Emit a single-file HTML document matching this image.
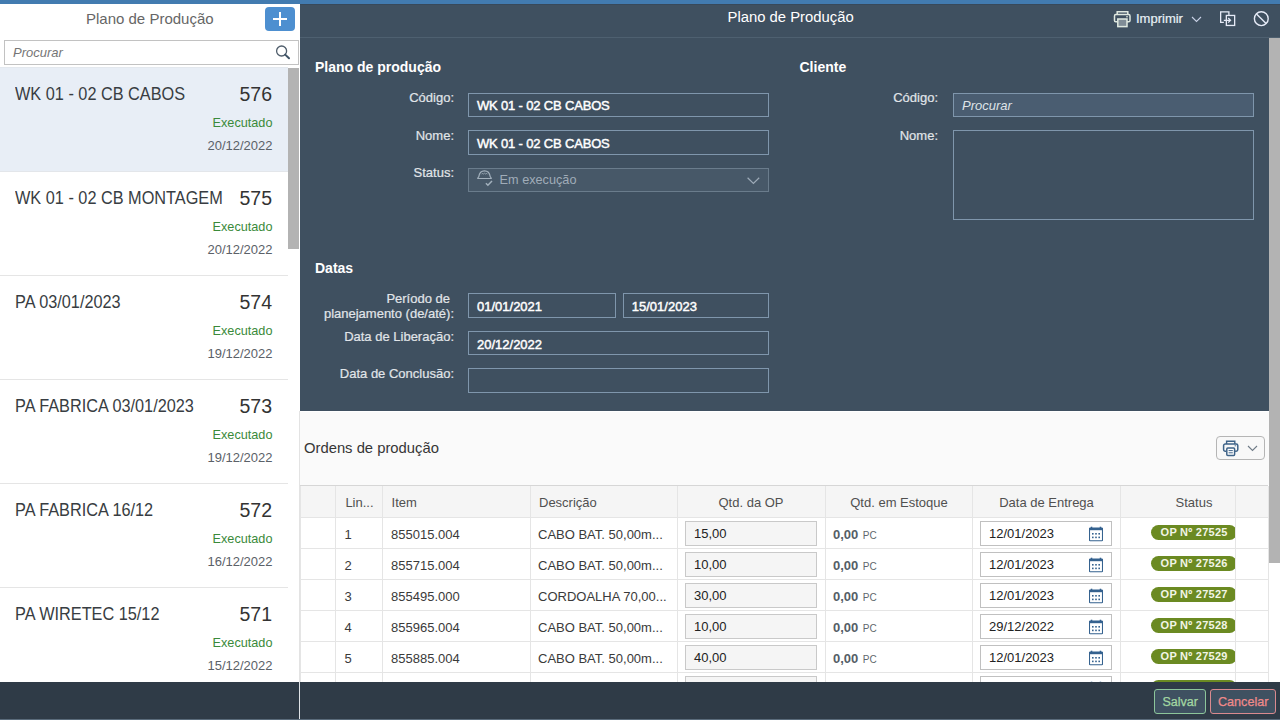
<!DOCTYPE html>
<html><head><meta charset="utf-8">
<style>
*{box-sizing:border-box;margin:0;padding:0}
html,body{width:1280px;height:720px;overflow:hidden;background:#fff;font-family:"Liberation Sans",sans-serif}
.a{position:absolute}
.t{position:absolute;white-space:nowrap;line-height:1}
.r{text-align:right}
#topbar{left:0;top:0;width:1280px;height:4px;background:#427bb0}
#left{left:0;top:4px;width:300px;height:678px;background:#fff;overflow:hidden}
#right{left:300px;top:4px;width:980px;height:678px;background:#fff;overflow:hidden}
#footer{left:0;top:682px;width:1280px;height:38px;background:#2f3b47}
.lbl{color:#e1e5e9;font-size:13px;-webkit-text-stroke:0.2px #e1e5e9}
.inp{position:absolute;border:1px solid #7f96ac;background:#3f5060}
.itxt{color:#fff;font-size:13px;-webkit-text-stroke:0.45px #fff}
.sep{position:absolute;background:#e5e5e5}
.ht{color:#505050;font-size:13px}
.ct{color:#3a3a3a;font-size:13px}
.qin{position:absolute;left:385px;width:132px;height:25px;border:1px solid #c9c9c9;background:#f5f5f5}
.din{position:absolute;left:680px;width:132px;height:25px;border:1px solid #c0c0c0;background:#fff}
.pill{position:absolute;left:851px;width:86px;height:15px;border-radius:8px;background:#6b8a22}
.ptxt{color:#f2f5e6;font-weight:bold;font-size:11px;letter-spacing:0.25px}
</style></head><body>
<div id="topbar" class="a"></div>

<!-- LEFT MASTER -->
<div id="left" class="a">
  <div class="t" style="left:86px;top:7px;font-size:15px;color:#666">Plano de Produção</div>
  <div class="a" style="left:265px;top:3px;width:30px;height:24px;border-radius:4px;background:#4d8fd0"></div>
  <div class="a" style="left:273px;top:13.7px;width:14px;height:2px;background:#fff"></div>
  <div class="a" style="left:279px;top:7.7px;width:2px;height:14px;background:#fff"></div>
  <div class="a" style="left:4px;top:36px;width:295px;height:25px;border:1px solid #c2c2c2;background:#fff"></div>
  <div class="t" style="left:13px;top:42px;font-size:13px;font-style:italic;color:#757575">Procurar</div>
  <svg class="a" style="left:274px;top:40px" width="18" height="18" viewBox="0 0 18 18"><circle cx="7.6" cy="7" r="5" fill="none" stroke="#4f5d6b" stroke-width="1.3"/><line x1="11.2" y1="10.6" x2="15" y2="14.3" stroke="#3f5366" stroke-width="2" stroke-linecap="round"/></svg>
  <!-- items -->
  <div class="a" style="left:0;top:63px;width:288px;height:104px;background:#e8eef6"></div>
  <div class="a" style="left:0;top:63px;width:288px;height:1px;background:#e3e8ee"></div>
  <div class="sep" style="left:0;top:167px;width:288px;height:1px;background:#e3e6ea"></div>
  <div class="sep" style="left:0;top:271px;width:288px;height:1px"></div>
  <div class="sep" style="left:0;top:375px;width:288px;height:1px"></div>
  <div class="sep" style="left:0;top:479px;width:288px;height:1px"></div>
  <div class="sep" style="left:0;top:583px;width:288px;height:1px"></div>
  <div class="a" style="left:288px;top:64px;width:11px;height:181px;background:#b3b3b3"></div>

  <div class="t" style="left:15px;top:82.0px;font-size:16.3px;color:#383d42;transform:scaleY(1.09);transform-origin:0 84.5%">WK 01 - 02 CB CABOS</div>
  <div class="t r" style="right:28px;top:81.4px;font-size:19.5px;color:#333">576</div>
  <div class="t r" style="right:27.5px;top:112.8px;font-size:12.7px;color:#3a8a3a">Executado</div>
  <div class="t r" style="right:27.5px;top:135px;font-size:13px;color:#5b6168">20/12/2022</div>

  <div class="t" style="left:15px;top:186.0px;font-size:16.3px;color:#383d42;transform:scaleY(1.09);transform-origin:0 84.5%">WK 01 - 02 CB MONTAGEM</div>
  <div class="t r" style="right:28px;top:185.4px;font-size:19.5px;color:#333">575</div>
  <div class="t r" style="right:27.5px;top:216.8px;font-size:12.7px;color:#3a8a3a">Executado</div>
  <div class="t r" style="right:27.5px;top:239px;font-size:13px;color:#5b6168">20/12/2022</div>

  <div class="t" style="left:15px;top:290.0px;font-size:16.3px;color:#383d42;transform:scaleY(1.09);transform-origin:0 84.5%">PA 03/01/2023</div>
  <div class="t r" style="right:28px;top:289.4px;font-size:19.5px;color:#333">574</div>
  <div class="t r" style="right:27.5px;top:320.8px;font-size:12.7px;color:#3a8a3a">Executado</div>
  <div class="t r" style="right:27.5px;top:343px;font-size:13px;color:#5b6168">19/12/2022</div>

  <div class="t" style="left:15px;top:394.0px;font-size:16.3px;color:#383d42;transform:scaleY(1.09);transform-origin:0 84.5%">PA FABRICA 03/01/2023</div>
  <div class="t r" style="right:28px;top:393.4px;font-size:19.5px;color:#333">573</div>
  <div class="t r" style="right:27.5px;top:424.8px;font-size:12.7px;color:#3a8a3a">Executado</div>
  <div class="t r" style="right:27.5px;top:447px;font-size:13px;color:#5b6168">19/12/2022</div>

  <div class="t" style="left:15px;top:498.0px;font-size:16.3px;color:#383d42;transform:scaleY(1.09);transform-origin:0 84.5%">PA FABRICA 16/12</div>
  <div class="t r" style="right:28px;top:497.4px;font-size:19.5px;color:#333">572</div>
  <div class="t r" style="right:27.5px;top:528.8px;font-size:12.7px;color:#3a8a3a">Executado</div>
  <div class="t r" style="right:27.5px;top:551px;font-size:13px;color:#5b6168">16/12/2022</div>

  <div class="t" style="left:15px;top:602.0px;font-size:16.3px;color:#383d42;transform:scaleY(1.09);transform-origin:0 84.5%">PA WIRETEC 15/12</div>
  <div class="t r" style="right:28px;top:601.4px;font-size:19.5px;color:#333">571</div>
  <div class="t r" style="right:27.5px;top:632.8px;font-size:12.7px;color:#3a8a3a">Executado</div>
  <div class="t r" style="right:27.5px;top:655px;font-size:13px;color:#5b6168">15/12/2022</div>
</div>

<!-- RIGHT DETAIL (coords relative: x-300, y-4) -->
<div id="right" class="a">
  <div class="a" style="left:0;top:0;width:980px;height:407px;background:#3f5060"></div>
  <div class="a" style="left:0;top:33px;width:980px;height:1px;background:#4e6070"></div>
  <div class="a" style="left:0;top:0;width:980px;height:1px;background:#38495a"></div>
  <div class="t" style="left:427.5px;top:6.4px;font-size:14.85px;color:#fff">Plano de Produção</div>
  <!-- header icons -->
  <svg class="a" style="left:812px;top:6px" width="20" height="18" viewBox="0 0 20 18">
    <path d="M5.2 4.5V1.8h10.6v2.7" fill="none" stroke="#dfe8e0" stroke-width="1.5"/>
    <rect x="2.5" y="4.6" width="15.5" height="7.2" rx="1.3" fill="none" stroke="#dfe8e0" stroke-width="1.5"/>
    <rect x="5.8" y="9" width="9.2" height="7.6" fill="#7f8c96" stroke="#dfe8e0" stroke-width="1.5"/>
    <line x1="14" y1="6.8" x2="16" y2="6.8" stroke="#dfe8e0" stroke-width="1"/>
  </svg>
  <div class="t" style="left:836px;top:8.2px;font-size:13px;color:#e8f0f6;-webkit-text-stroke:0.2px #e8f0f6">Imprimir</div>
  <svg class="a" style="left:891px;top:12px" width="11" height="7" viewBox="0 0 11 7"><path d="M1 1l4.5 4.5L10 1" fill="none" stroke="#c9d1e6" stroke-width="1.1"/></svg>
  <svg class="a" style="left:918px;top:6px" width="20" height="18" viewBox="0 0 20 18">
    <path d="M10.9 5.2V1.95H2.65V12.4h3.2" fill="none" stroke="#e6ebf7" stroke-width="1.3"/>
    <rect x="8.35" y="5.45" width="8.3" height="10" fill="none" stroke="#e6ebf7" stroke-width="1.3"/>
    <path d="M5.8 10.3h6.6M10.2 8l2.3 2.3-2.3 2.3" fill="none" stroke="#e6ebf7" stroke-width="1.3"/>
  </svg>
  <svg class="a" style="left:951px;top:6px" width="20" height="18" viewBox="0 0 20 18">
    <circle cx="10.3" cy="8.7" r="6.9" fill="none" stroke="#e6ebf7" stroke-width="1.4"/>
    <line x1="5.5" y1="3.9" x2="15.1" y2="13.5" stroke="#e6ebf7" stroke-width="1.4"/>
  </svg>

  <!-- form: plano de producao -->
  <div class="t" style="left:15px;top:56.2px;font-size:14px;font-weight:bold;color:#fff">Plano de produção</div>
  <div class="t lbl r" style="right:826px;top:87px">Código:</div>
  <div class="t lbl r" style="right:826px;top:125px">Nome:</div>
  <div class="t lbl r" style="right:826px;top:162px">Status:</div>
  <div class="inp" style="left:168px;top:89px;width:301px;height:24px"></div>
  <div class="t itxt" style="left:177px;top:95.4px;letter-spacing:-0.17px">WK 01 - 02 CB CABOS</div>
  <div class="inp" style="left:168px;top:126px;width:301px;height:25px"></div>
  <div class="t itxt" style="left:177px;top:132.8px;letter-spacing:-0.17px">WK 01 - 02 CB CABOS</div>
  <div class="inp" style="left:168px;top:164px;width:301px;height:24px;background:#475868;border-color:#6a7c8c"></div>
  <svg class="a" style="left:175px;top:165px" width="20" height="19" viewBox="0 0 20 19">
    <path d="M2.7 9.5C2.7 8.6 3.5 8.4 3.8 7.6C4.3 4.1 6.6 1.9 9.5 1.9S14.7 4.1 15.2 7.6C15.5 8.4 16.3 8.6 16.3 9.5Z" fill="none" stroke="#a3b1bd" stroke-width="1.15" stroke-linejoin="round"/>
    <path d="M6.4 5.3l0.9-0.9 0.9 0.7 1.3-0.9 1.3 0.9 0.9-0.7 0.9 0.9" fill="none" stroke="#a3b1bd" stroke-width="0.8"/>
    <path d="M10.9 14.2l2 2 4.1-4.2" fill="none" stroke="#a3b1bd" stroke-width="1.5"/>
  </svg>
  <div class="t" style="left:199.6px;top:170px;font-size:12.7px;color:#a0acb8">Em execução</div>
  <svg class="a" style="left:447px;top:173px" width="13" height="8" viewBox="0 0 13 8"><path d="M0.6 0.8l5.8 5.6 5.8-5.6" fill="none" stroke="#9eabb8" stroke-width="1.2"/></svg>

  <!-- cliente -->
  <div class="t" style="left:499.5px;top:56.2px;font-size:14px;font-weight:bold;color:#fff">Cliente</div>
  <div class="t lbl r" style="right:342px;top:87px">Código:</div>
  <div class="t lbl r" style="right:342px;top:125px">Nome:</div>
  <div class="inp" style="left:653px;top:89px;width:301px;height:24px;background:#4a5d71"></div>
  <div class="t" style="left:662px;top:95px;font-size:13px;font-style:italic;color:#dfe4e8">Procurar</div>
  <div class="inp" style="left:653px;top:126px;width:301px;height:90px"></div>

  <!-- datas -->
  <div class="t" style="left:15px;top:256.7px;font-size:14px;font-weight:bold;color:#fff">Datas</div>
  <div class="t lbl r" style="right:830px;top:287.7px">Período de</div>
  <div class="t lbl r" style="right:826px;top:302.7px">planejamento (de/até):</div>
  <div class="t lbl r" style="right:826px;top:325.6px">Data de Liberação:</div>
  <div class="t lbl r" style="right:826px;top:362.5px">Data de Conclusão:</div>
  <div class="inp" style="left:168px;top:289px;width:148px;height:25px"></div>
  <div class="t itxt" style="left:177px;top:296px">01/01/2021</div>
  <div class="inp" style="left:323px;top:289px;width:146px;height:25px"></div>
  <div class="t itxt" style="left:331.8px;top:296px">15/01/2023</div>
  <div class="inp" style="left:168px;top:327px;width:301px;height:24px"></div>
  <div class="t itxt" style="left:177px;top:333.8px">20/12/2022</div>
  <div class="inp" style="left:168px;top:364px;width:301px;height:25px"></div>
  <!-- table section -->
  <div class="a" style="left:0;top:407px;width:980px;height:1px;background:#fff"></div>
  <div class="a" style="left:0;top:408px;width:980px;height:73px;background:#fafafa"></div>
  <div class="t" style="left:4px;top:437px;font-size:14.8px;color:#363636">Ordens de produção</div>
  <div class="a" style="left:916px;top:432px;width:49px;height:24px;border:1px solid #b5b5b5;border-radius:4px;background:#f8f8f8"></div>
  <svg class="a" style="left:922px;top:435px" width="18" height="18" viewBox="0 0 18 18"><path d="M4.6 5V2.3h8.2V5" fill="none" stroke="#3e6388" stroke-width="1.4"/><path d="M4.3 12.2H3.2a1.6 1.6 0 0 1-1.6-1.6V6.6A1.6 1.6 0 0 1 3.2 5h11a1.6 1.6 0 0 1 1.6 1.6v4a1.6 1.6 0 0 1-1.6 1.6h-1.1" fill="none" stroke="#3e6388" stroke-width="1.5"/><rect x="4.8" y="9" width="7.8" height="7.5" rx="1" fill="#fff" stroke="#3e6388" stroke-width="1.5"/><path d="M6.6 11.6h4.2M6.6 13.8h4.2" stroke="#3e6388" stroke-width="1"/><path d="M12.6 6.8h1.6" stroke="#3e6388" stroke-width="0.9"/></svg>
  <svg class="a" style="left:947px;top:441px" width="11" height="7" viewBox="0 0 11 7"><path d="M1 1l4.5 4.5L10 1" fill="none" stroke="#6f7b87" stroke-width="1.1"/></svg>
  <div class="a" style="left:0;top:481px;width:968px;height:1px;background:#d6d6d6"></div>
  <div class="a" style="left:0;top:482px;width:968px;height:31px;background:#f5f5f5"></div>
  <div class="a" style="left:0;top:482px;width:968px;height:200px;background:#fff;top:513px"></div>
  <div class="sep" style="left:0;top:513px;width:968px;height:1px"></div>
  <div class="sep" style="left:0;top:544px;width:968px;height:1px"></div>
  <div class="sep" style="left:0;top:575px;width:968px;height:1px"></div>
  <div class="sep" style="left:0;top:606px;width:968px;height:1px"></div>
  <div class="sep" style="left:0;top:637px;width:968px;height:1px"></div>
  <div class="sep" style="left:0;top:668px;width:968px;height:1px"></div>
  <div class="sep" style="left:0;top:699px;width:968px;height:1px"></div>
  <div class="sep" style="left:0px;top:482px;width:1px;height:200px"></div>
  <div class="sep" style="left:35px;top:482px;width:1px;height:200px"></div>
  <div class="sep" style="left:82px;top:482px;width:1px;height:200px"></div>
  <div class="sep" style="left:230px;top:482px;width:1px;height:200px"></div>
  <div class="sep" style="left:377px;top:482px;width:1px;height:200px"></div>
  <div class="sep" style="left:525px;top:482px;width:1px;height:200px"></div>
  <div class="sep" style="left:672px;top:482px;width:1px;height:200px"></div>
  <div class="sep" style="left:820px;top:482px;width:1px;height:200px"></div>
  <div class="sep" style="left:935px;top:482px;width:1px;height:200px"></div>
  <div class="sep" style="left:968px;top:482px;width:1px;height:200px"></div>
  <div class="t ht" style="left:45.4px;top:491.6px">Lin...</div>
  <div class="t ht" style="left:91.6px;top:491.6px">Item</div>
  <div class="t ht" style="left:239px;top:491.6px">Descrição</div>
  <div class="t ht" style="left:377px;width:148px;text-align:center;top:491.6px">Qtd. da OP</div>
  <div class="t ht" style="left:525px;width:148px;text-align:center;top:491.6px">Qtd. em Estoque</div>
  <div class="t ht" style="left:673px;width:147px;text-align:center;top:491.6px">Data de Entrega</div>
  <div class="t ht" style="left:820px;width:148px;text-align:center;top:491.6px">Status</div>
  <div class="t ct" style="left:44.5px;top:523.75px">1</div>
  <div class="t ct" style="left:91px;top:523.75px">855015.004</div>
  <div class="t ct" style="left:238px;top:523.75px">CABO BAT. 50,00m...</div>
  <div class="qin" style="top:517px"></div>
  <div class="din" style="top:517px"></div>
  <svg class="a" style="left:789px;top:522px" width="14" height="16" viewBox="0 0 14 16"><rect x="0.5" y="2" width="13" height="12.7" rx="0.6" fill="none" stroke="#35628f" stroke-width="1.1"/><rect x="0.5" y="2" width="13" height="2.2" fill="#35628f"/><rect x="1.8" y="0.7" width="1.5" height="2" fill="#35628f"/><rect x="10.7" y="0.7" width="1.5" height="2" fill="#35628f"/><g fill="#35628f"><rect x="3" y="7" width="1.6" height="1.6"/><rect x="6.2" y="7" width="1.6" height="1.6"/><rect x="9.4" y="7" width="1.6" height="1.6"/><rect x="3" y="10.6" width="1.6" height="1.6"/><rect x="6.2" y="10.6" width="1.6" height="1.6"/><rect x="9.4" y="10.6" width="1.6" height="1.6"/></g></svg>
  <div class="pill" style="top:521px"></div>
  <div class="t ct" style="left:394px;top:523.4px;color:#222">15,00</div>
  <div class="t" style="left:533px;top:524px;font-size:13px;font-weight:bold;color:#545e66">0,00</div>
  <div class="t" style="left:562.8px;top:526.6px;font-size:10px;color:#5f676e">PC</div>
  <div class="t ct" style="left:689px;top:522.5px;color:#222">12/01/2023</div>
  <div class="t ptxt" style="left:860.6px;top:522.6px">OP Nº 27525</div>
  <div class="t ct" style="left:44.5px;top:554.75px">2</div>
  <div class="t ct" style="left:91px;top:554.75px">855715.004</div>
  <div class="t ct" style="left:238px;top:554.75px">CABO BAT. 50,00m...</div>
  <div class="qin" style="top:548px"></div>
  <div class="din" style="top:548px"></div>
  <svg class="a" style="left:789px;top:553px" width="14" height="16" viewBox="0 0 14 16"><rect x="0.5" y="2" width="13" height="12.7" rx="0.6" fill="none" stroke="#35628f" stroke-width="1.1"/><rect x="0.5" y="2" width="13" height="2.2" fill="#35628f"/><rect x="1.8" y="0.7" width="1.5" height="2" fill="#35628f"/><rect x="10.7" y="0.7" width="1.5" height="2" fill="#35628f"/><g fill="#35628f"><rect x="3" y="7" width="1.6" height="1.6"/><rect x="6.2" y="7" width="1.6" height="1.6"/><rect x="9.4" y="7" width="1.6" height="1.6"/><rect x="3" y="10.6" width="1.6" height="1.6"/><rect x="6.2" y="10.6" width="1.6" height="1.6"/><rect x="9.4" y="10.6" width="1.6" height="1.6"/></g></svg>
  <div class="pill" style="top:552px"></div>
  <div class="t ct" style="left:394px;top:554.4px;color:#222">10,00</div>
  <div class="t" style="left:533px;top:555px;font-size:13px;font-weight:bold;color:#545e66">0,00</div>
  <div class="t" style="left:562.8px;top:557.6px;font-size:10px;color:#5f676e">PC</div>
  <div class="t ct" style="left:689px;top:553.5px;color:#222">12/01/2023</div>
  <div class="t ptxt" style="left:860.6px;top:553.6px">OP Nº 27526</div>
  <div class="t ct" style="left:44.5px;top:585.75px">3</div>
  <div class="t ct" style="left:91px;top:585.75px">855495.000</div>
  <div class="t ct" style="left:238px;top:585.75px">CORDOALHA 70,00...</div>
  <div class="qin" style="top:579px"></div>
  <div class="din" style="top:579px"></div>
  <svg class="a" style="left:789px;top:584px" width="14" height="16" viewBox="0 0 14 16"><rect x="0.5" y="2" width="13" height="12.7" rx="0.6" fill="none" stroke="#35628f" stroke-width="1.1"/><rect x="0.5" y="2" width="13" height="2.2" fill="#35628f"/><rect x="1.8" y="0.7" width="1.5" height="2" fill="#35628f"/><rect x="10.7" y="0.7" width="1.5" height="2" fill="#35628f"/><g fill="#35628f"><rect x="3" y="7" width="1.6" height="1.6"/><rect x="6.2" y="7" width="1.6" height="1.6"/><rect x="9.4" y="7" width="1.6" height="1.6"/><rect x="3" y="10.6" width="1.6" height="1.6"/><rect x="6.2" y="10.6" width="1.6" height="1.6"/><rect x="9.4" y="10.6" width="1.6" height="1.6"/></g></svg>
  <div class="pill" style="top:583px"></div>
  <div class="t ct" style="left:394px;top:585.4px;color:#222">30,00</div>
  <div class="t" style="left:533px;top:586px;font-size:13px;font-weight:bold;color:#545e66">0,00</div>
  <div class="t" style="left:562.8px;top:588.6px;font-size:10px;color:#5f676e">PC</div>
  <div class="t ct" style="left:689px;top:584.5px;color:#222">12/01/2023</div>
  <div class="t ptxt" style="left:860.6px;top:584.6px">OP Nº 27527</div>
  <div class="t ct" style="left:44.5px;top:616.75px">4</div>
  <div class="t ct" style="left:91px;top:616.75px">855965.004</div>
  <div class="t ct" style="left:238px;top:616.75px">CABO BAT. 50,00m...</div>
  <div class="qin" style="top:610px"></div>
  <div class="din" style="top:610px"></div>
  <svg class="a" style="left:789px;top:615px" width="14" height="16" viewBox="0 0 14 16"><rect x="0.5" y="2" width="13" height="12.7" rx="0.6" fill="none" stroke="#35628f" stroke-width="1.1"/><rect x="0.5" y="2" width="13" height="2.2" fill="#35628f"/><rect x="1.8" y="0.7" width="1.5" height="2" fill="#35628f"/><rect x="10.7" y="0.7" width="1.5" height="2" fill="#35628f"/><g fill="#35628f"><rect x="3" y="7" width="1.6" height="1.6"/><rect x="6.2" y="7" width="1.6" height="1.6"/><rect x="9.4" y="7" width="1.6" height="1.6"/><rect x="3" y="10.6" width="1.6" height="1.6"/><rect x="6.2" y="10.6" width="1.6" height="1.6"/><rect x="9.4" y="10.6" width="1.6" height="1.6"/></g></svg>
  <div class="pill" style="top:614px"></div>
  <div class="t ct" style="left:394px;top:616.4px;color:#222">10,00</div>
  <div class="t" style="left:533px;top:617px;font-size:13px;font-weight:bold;color:#545e66">0,00</div>
  <div class="t" style="left:562.8px;top:619.6px;font-size:10px;color:#5f676e">PC</div>
  <div class="t ct" style="left:689px;top:615.5px;color:#222">29/12/2022</div>
  <div class="t ptxt" style="left:860.6px;top:615.6px">OP Nº 27528</div>
  <div class="t ct" style="left:44.5px;top:647.75px">5</div>
  <div class="t ct" style="left:91px;top:647.75px">855885.004</div>
  <div class="t ct" style="left:238px;top:647.75px">CABO BAT. 50,00m...</div>
  <div class="qin" style="top:641px"></div>
  <div class="din" style="top:641px"></div>
  <svg class="a" style="left:789px;top:646px" width="14" height="16" viewBox="0 0 14 16"><rect x="0.5" y="2" width="13" height="12.7" rx="0.6" fill="none" stroke="#35628f" stroke-width="1.1"/><rect x="0.5" y="2" width="13" height="2.2" fill="#35628f"/><rect x="1.8" y="0.7" width="1.5" height="2" fill="#35628f"/><rect x="10.7" y="0.7" width="1.5" height="2" fill="#35628f"/><g fill="#35628f"><rect x="3" y="7" width="1.6" height="1.6"/><rect x="6.2" y="7" width="1.6" height="1.6"/><rect x="9.4" y="7" width="1.6" height="1.6"/><rect x="3" y="10.6" width="1.6" height="1.6"/><rect x="6.2" y="10.6" width="1.6" height="1.6"/><rect x="9.4" y="10.6" width="1.6" height="1.6"/></g></svg>
  <div class="pill" style="top:645px"></div>
  <div class="t ct" style="left:394px;top:647.4px;color:#222">40,00</div>
  <div class="t" style="left:533px;top:648px;font-size:13px;font-weight:bold;color:#545e66">0,00</div>
  <div class="t" style="left:562.8px;top:650.6px;font-size:10px;color:#5f676e">PC</div>
  <div class="t ct" style="left:689px;top:646.5px;color:#222">12/01/2023</div>
  <div class="t ptxt" style="left:860.6px;top:646.6px">OP Nº 27529</div>
  <div class="qin" style="top:672px"></div>
  <div class="din" style="top:672px"></div>
  <svg class="a" style="left:789px;top:677px" width="14" height="16" viewBox="0 0 14 16"><rect x="0.5" y="2" width="13" height="12.7" rx="0.6" fill="none" stroke="#35628f" stroke-width="1.1"/><rect x="0.5" y="2" width="13" height="2.2" fill="#35628f"/><rect x="1.8" y="0.7" width="1.5" height="2" fill="#35628f"/><rect x="10.7" y="0.7" width="1.5" height="2" fill="#35628f"/><g fill="#35628f"><rect x="3" y="7" width="1.6" height="1.6"/><rect x="6.2" y="7" width="1.6" height="1.6"/><rect x="9.4" y="7" width="1.6" height="1.6"/><rect x="3" y="10.6" width="1.6" height="1.6"/><rect x="6.2" y="10.6" width="1.6" height="1.6"/><rect x="9.4" y="10.6" width="1.6" height="1.6"/></g></svg>
  <div class="pill" style="top:676px"></div>
  <div class="a" style="left:935px;top:513px;width:33px;height:170px;background:#fff"></div>
  <div class="sep" style="left:935px;top:482px;width:1px;height:200px"></div>
  <div class="sep" style="left:935px;top:513px;width:33px;height:1px"></div>
  <div class="sep" style="left:935px;top:544px;width:33px;height:1px"></div>
  <div class="sep" style="left:935px;top:575px;width:33px;height:1px"></div>
  <div class="sep" style="left:935px;top:606px;width:33px;height:1px"></div>
  <div class="sep" style="left:935px;top:637px;width:33px;height:1px"></div>
  <div class="sep" style="left:935px;top:668px;width:33px;height:1px"></div>
  <div class="sep" style="left:935px;top:699px;width:33px;height:1px"></div>
  <div class="sep" style="left:968px;top:482px;width:1px;height:200px"></div>
  <div class="a" style="left:969px;top:34px;width:11px;height:525px;background:#b3b3b3"></div>
  <div class="a" style="left:969px;top:559px;width:11px;height:130px;background:#fff"></div>
  
</div>

<div class="a" style="left:299px;top:411px;width:1px;height:271px;background:#e3e3e3"></div>
<div id="footer" class="a">
  <div class="a" style="left:299px;top:0;width:1px;height:38px;background:#dfe3e7"></div>
  <div class="a" style="left:0;top:37px;width:1280px;height:1px;background:#5a6b7b"></div>
  <div class="a" style="left:1154px;top:7px;width:52px;height:25px;border:1px solid #8cc59a;border-radius:3px;background:#3f5161"></div>
  <div class="t" style="left:1162.4px;top:14.4px;font-size:12.5px;color:#a3d8a2;-webkit-text-stroke:0.25px #a3d8a2">Salvar</div>
  <div class="a" style="left:1210px;top:7px;width:66px;height:25px;border:1px solid #d98a8f;border-radius:3px;background:#3f5161"></div>
  <div class="t" style="left:1218px;top:14.4px;font-size:12.6px;color:#f08a8a;-webkit-text-stroke:0.25px #f08a8a">Cancelar</div>
</div>
</body></html>
